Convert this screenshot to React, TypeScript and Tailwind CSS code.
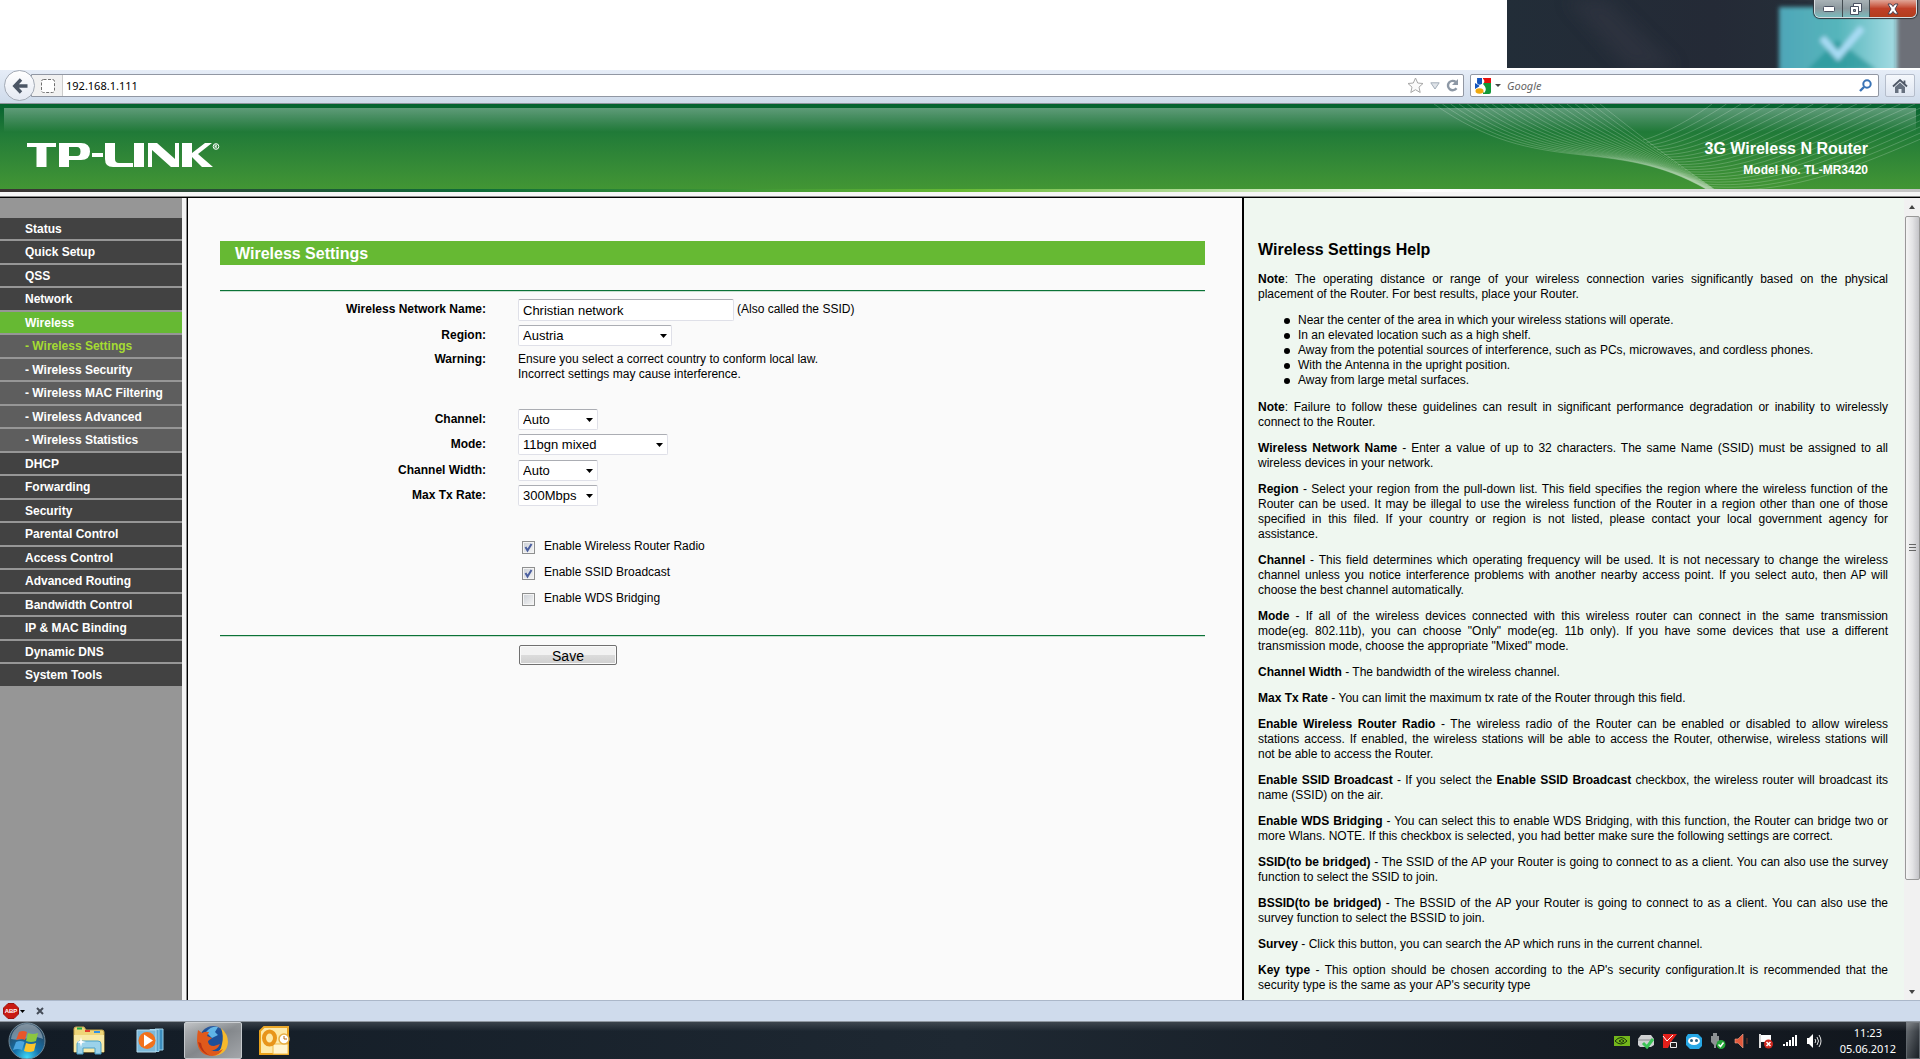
import type { ReactNode } from "react";

const menu = [
  { label: "Status" },
  { label: "Quick Setup" },
  { label: "QSS" },
  { label: "Network" },
  { label: "Wireless", active: true },
  { label: "- Wireless Settings", sub: true, active: true },
  { label: "- Wireless Security", sub: true },
  { label: "- Wireless MAC Filtering", sub: true },
  { label: "- Wireless Advanced", sub: true },
  { label: "- Wireless Statistics", sub: true },
  { label: "DHCP" },
  { label: "Forwarding" },
  { label: "Security" },
  { label: "Parental Control" },
  { label: "Access Control" },
  { label: "Advanced Routing" },
  { label: "Bandwidth Control" },
  { label: "IP & MAC Binding" },
  { label: "Dynamic DNS" },
  { label: "System Tools" },
];

const tips = [
  "Near the center of the area in which your wireless stations will operate.",
  "In an elevated location such as a high shelf.",
  "Away from the potential sources of interference, such as PCs, microwaves, and cordless phones.",
  "With the Antenna in the upright position.",
  "Away from large metal surfaces.",
];

const itemClass = (item: { sub?: boolean; active?: boolean }) => {
  if (item.sub) return item.active ? "bg-[#5e5e5e] text-[#a5dc32]" : "bg-[#5e5e5e] text-white";
  return item.active ? "bg-[#66b933] text-white" : "bg-[#424242] text-white";
};

function TitleBar() {
  return (
    <div className="flex h-[70px] shrink-0 justify-end bg-white">
      <div className="relative h-[68px] w-[413px] overflow-hidden bg-linear-to-r from-[#222d38] via-[#242a36] to-[#26333b]">
        <svg className="h-full w-full" viewBox="0 0 413 68" aria-hidden="true">
          <defs>
            <linearGradient id="glass" x1="0" y1="0" x2="1" y2="0">
              <stop offset="0" stopColor="#4fa6b8" />
              <stop offset="0.5" stopColor="#55b5bb" />
              <stop offset="1" stopColor="#a5dce4" />
            </linearGradient>
            <linearGradient id="top" x1="0" y1="0" x2="1" y2="0">
              <stop offset="0" stopColor="#55585d" stopOpacity="0" />
              <stop offset="1" stopColor="#66696e" />
            </linearGradient>
            <filter id="soft" x="-20%" y="-20%" width="140%" height="140%">
              <feGaussianBlur stdDeviation="2" />
            </filter>
            <filter id="softer" x="-50%" y="-50%" width="200%" height="200%">
              <feGaussianBlur stdDeviation="8" />
            </filter>
          </defs>
          <path d="M60 0h40l70 68h-50z" fill="#353844" opacity=".5" filter="url(#softer)" />
          <path d="M200 -8h213v14z" fill="url(#top)" filter="url(#soft)" />
          <path d="M388 0h25v68h-25z" fill="#6d7078" />
          <g filter="url(#soft)">
            <path d="M272 7h118v70h-118z" fill="url(#glass)" />
            <path d="M300 70l30-30 40 30z" fill="#259497" opacity=".7" />
            <path d="M315 38l16 18 24-28" fill="none" stroke="#a9dcf5" strokeWidth="7" />
          </g>
        </svg>
        <div className="absolute top-0 right-[3px] flex h-[18px] overflow-hidden rounded-b-md border border-t-0 border-[#d6dde0] shadow-[0_0_1px_1px_#30343a]">
          <button aria-label="Minimize" className="flex w-7 items-center justify-center border-r border-[#434b50] bg-linear-to-b from-[#a8b2b6] via-[#8d999e] to-[#78babd]">
            <svg width="12" height="6"><rect x=".5" y=".5" width="11" height="5" rx="1" fill="#fff" stroke="#4b5263" /></svg>
          </button>
          <button aria-label="Restore" className="flex w-[27px] items-center justify-center border-r border-[#434b50] bg-linear-to-b from-[#a8b2b6] via-[#8d999e] to-[#78babd]">
            <svg width="12" height="12" fill="#fff" stroke="#4b5263"><path d="M3.500.5h8v8h-8z" /><path d="M.5 3.500h8v8h-8z" /><path d="M3.500 6.500h2v2h-2z" fill="#8ba0a8" /></svg>
          </button>
          <button aria-label="Close" className="flex w-[46px] items-center justify-center bg-linear-to-b from-[#e0a698] via-[#c04028] to-[#b23c1c]">
            <svg width="14" height="12" viewBox="0 0 14 12"><path d="M2 1h3l2 2.500L9 1h3L9 6l3 5H9L7 8.500 5 11H2l3-5z" fill="#fff" stroke="#4b4252" /></svg>
          </button>
        </div>
      </div>
    </div>
  );
}

function NavBar() {
  return (
    <div className="flex h-[34px] shrink-0 items-center border-b border-[#8f959c] bg-linear-to-b from-[#e6edf7] to-[#cfdbeb] pr-[5px] pb-0.5 pl-1 font-['Noto_Sans',sans-serif]">
      <button aria-label="Back" className="z-10 flex size-[31px] shrink-0 items-center justify-center rounded-full border border-[#a3aab5] bg-linear-to-b from-white to-[#e4e9f3]">
        <svg width="16" height="16" viewBox="0 0 16 16" fill="none" stroke="#4b5665" strokeWidth="3.400"><path d="M9 1.500L2.800 8 9 14.500M3 8h12.500" /></svg>
      </button>
      <div className="-ml-1 flex h-[23px] flex-1 items-center rounded-r-xs border border-[#9197a3] bg-white">
        <div className="flex h-full w-[31px] items-center justify-center border-r border-[#ccc] bg-[#f1f1f1] pl-0.5">
          <svg width="14" height="14"><rect x=".5" y=".5" width="13" height="13" rx="2" fill="#fff" stroke="#707070" strokeDasharray="3 1.500" /></svg>
        </div>
        <input aria-label="Address" defaultValue="192.168.1.111" className="h-full min-w-0 flex-1 pl-[3px] text-[11px] outline-none" />
        <button aria-label="Bookmark" className="mr-1.5">
          <svg width="17" height="17" viewBox="0 0 17 17" fill="#fafafa" stroke="#a8a8a8"><path d="M8.500 1l2.200 5 5.300.5-4 3.600 1.200 5.400-4.700-2.800-4.700 2.800L5 10.100 1 6.500 6.300 6z" /></svg>
        </button>
        <button aria-label="History" className="mr-1.5">
          <svg width="10" height="8" viewBox="0 0 10 8" fill="#dfe3e8" stroke="#a3adb8"><path d="M.8.8h8.400L5 7z" /></svg>
        </button>
        <button aria-label="Reload" className="mr-1">
          <svg width="13" height="13" viewBox="0 0 13 13"><path d="M10.500 9.300A4.700 4.700 0 1 1 9.800 3" fill="none" stroke="#8d98a5" strokeWidth="2.400" /><path d="M12 0v6H6z" fill="#8d98a5" /></svg>
        </button>
      </div>
      <div className="ml-1.5 flex h-[23px] w-[409px] items-center rounded-xs border border-[#9197a3] bg-white pl-1">
        <svg width="16" height="16" viewBox="0 0 16 16" aria-hidden="true">
          <path d="M8 0h8v5H8z" fill="#e8100c" />
          <path d="M8 5h8v9a2 2 0 0 1-2 2H8z" fill="#129839" />
          <path d="M0 5l5 3-5 3zM2 0h5v6H3z" fill="#1455bd" />
          <path d="M7 0c3 2 3 4 1 6 3 3 4 6 1 9L6 11 4 8l3-2z" fill="#fff" />
          <ellipse cx="4.500" cy="3.500" rx="2.500" ry="3.200" fill="#1455bd" />
          <ellipse cx="4.500" cy="13" rx="4" ry="2.700" fill="#efa80d" />
        </svg>
        <svg width="6" height="4" className="ml-1" aria-hidden="true"><path d="M0 0h6L3 3z" fill="#444" /></svg>
        <input aria-label="Search" placeholder="Google" className="h-full min-w-0 flex-1 pl-1.5 text-[11px] italic outline-none placeholder:text-[#666]" />
        <button aria-label="Go" className="mr-1.5">
          <svg width="13" height="13" viewBox="0 0 13 13" fill="none" stroke="#3973b5"><circle cx="8" cy="5" r="3.700" strokeWidth="2" /><path d="M5 8L1 12" strokeWidth="2.400" /></svg>
        </button>
      </div>
      <button aria-label="Home" className="ml-1.5 flex h-[23px] w-[30px] items-center justify-center rounded-xs border border-[#b5bdcb] bg-linear-to-b from-[#f5f8fc] to-[#dee5f1]">
        <svg width="16" height="14" viewBox="0 0 16 14"><path d="M1 7.500L8 1l7 6.500M12.500 1.500v4" fill="none" stroke="#4e5766" strokeWidth="1.800" /><path d="M3 8l5-4.500L13 8v6h-3.500v-4h-3v4H3z" fill="#66707f" /></svg>
      </button>
    </div>
  );
}

const strands = Array.from({ length: 21 }, (_, i) => i / 20);

function Waves() {
  return (
    <svg className="absolute inset-y-0 right-0 h-full w-[490px]" viewBox="0 0 490 85" fill="none" stroke="#fff" strokeWidth=".8" strokeOpacity=".25" aria-hidden="true">
      {strands.map((t) => (
        <path key={`l${t}`} d={`M${4 + t * 166} 0C${110 + t * 95} ${75 - t * 47},${180 + t * 60} ${30 + t * 25},${276 + t * 8} 85`} />
      ))}
      {strands.map((t) => (
        <path key={`r${t}`} d={`M${282 + t * 290} 0C${262 + t * 190} ${15 + t * 35},${230 + t * 150} ${32 + t * 60},${213 + t * 70} ${36 + t * 49}`} />
      ))}
    </svg>
  );
}

function Logo() {
  return (
    <svg className="absolute top-[39px] left-[27px] h-6 w-[193px]" viewBox="0 0 193 24" fill="#fff" role="img" aria-label="TP-LINK">
      <path d="M0 0h29v4h-9.500v20h-10V4H0z" />
      <path fillRule="evenodd" d="M32 0h22q9 0 9 8.500T54 17H42v7H32zM42 4v9h8q3.500 0 3.500-4.500T50 4z" />
      <path d="M65 10h11v4H65z" />
      <path d="M78 0h10v16q0 4 4 4h14v4H86q-8 0-8-8z" />
      <path d="M107 0h10v24h-10z" />
      <path d="M121 0h9l18 16V0h4v24h-8L125 7v17h-4z" />
      <path d="M155 0h10v10l13-10h7l-14 11 15 13h-11l-10-10v10h-10z" />
      <circle cx="189" cy="3.500" r="2.800" fill="none" stroke="#fff" />
      <path d="M188 5V2h1.500v1.500h-1.500l2 1.500" fill="none" stroke="#fff" strokeWidth=".7" />
    </svg>
  );
}

function Header() {
  return (
    <header className="shrink-0">
      <div className="relative h-[85px] bg-linear-to-b from-[#046330] via-[#217b38] via-35% to-[#429634]">
        <div className="absolute inset-x-1 top-1 h-6 bg-linear-to-b from-white/35 to-white/0" />
        <Waves />
        <Logo />
        <div className="absolute top-[35px] right-[52px] text-right font-bold text-white">
          <h1 className="text-base leading-5">3G Wireless N Router</h1>
          <p className="mt-[3px] text-xs leading-4">Model No. TL-MR3420</p>
        </div>
      </div>
      <div className="h-[3px] bg-linear-[to_right,#3b3333,#0e6b38_25%,#66b933_50%,#ffffff_74%,#c4c4c4]" />
      <div className="h-1 bg-[#f6f6f6]" />
      <div className="h-0.5 border-t border-[#8c8c8c] bg-black" />
    </header>
  );
}

function Sidebar() {
  return (
    <nav className="w-[182px] shrink-0 bg-[#969696] pt-5">
      <ul>
        {menu.map((item) => (
          <li key={item.label} className="border-b-2 border-[#969696] odd:h-[23px] even:h-6">
            <a href="#" className={`block h-full pl-[25px] text-xs leading-[22px] font-bold ${itemClass(item)}`}>
              {item.label}
            </a>
          </li>
        ))}
      </ul>
    </nav>
  );
}

function Row({ label, htmlFor, className, children }: { label: string; htmlFor?: string; className?: string; children: ReactNode }) {
  return (
    <div className={`flex ${className ?? "h-[25px]"}`}>
      <label htmlFor={htmlFor} className="w-[266px] shrink-0 pt-[3px] text-right font-bold">
        {label}
      </label>
      <div className="ml-8 flex items-start">{children}</div>
    </div>
  );
}

function Select({ id, value, className }: { id: string; value: string; className: string }) {
  return (
    <span className="relative flex">
      <select id={id} className={`h-[21px] appearance-none rounded-xs border border-[#dfe0e8] border-t-[#abadb3] bg-white pl-1 text-[13px] leading-4 ${className}`}>
        <option>{value}</option>
      </select>
      <svg width="7" height="4" className="pointer-events-none absolute top-[9px] right-[5px]" aria-hidden="true"><path d="M0 0h7L3.500 4z" /></svg>
    </span>
  );
}

function Check({ id, label, checked }: { id: string; label: string; checked?: boolean }) {
  return (
    <div className="flex h-[26px] items-start">
      <span className="relative mt-1 flex">
        <input id={id} type="checkbox" defaultChecked={checked} className="peer size-[13px] appearance-none border border-[#8e8f8f] bg-linear-to-br from-[#cbcfd5] to-[#f6f6f6] shadow-[inset_0_0_0_1px_#f4f4f4]" />
        <svg viewBox="0 0 13 13" className="pointer-events-none absolute inset-0 hidden size-[13px] peer-checked:block" fill="none" stroke="#4b5f9f" strokeWidth="2"><path d="M3.500 6l2 3.500L9.500 3" /></svg>
      </span>
      <label htmlFor={id} className="ml-[9px] pt-0.5">{label}</label>
    </div>
  );
}

function Settings() {
  return (
    <main className="min-w-0 flex-1 overflow-hidden bg-[#fafafa] pt-[43px] pr-[37px] pl-8">
      <h2 className="h-6 bg-[#66b933] pl-[15px] text-base leading-[26px] font-bold text-white">Wireless Settings</h2>
      <form className="mt-[25px] text-xs leading-[15px]">
        <div className="border-t border-[#0b7237] pt-2 shadow-[inset_0_1px_#c9dfd0]">
          <Row label="Wireless Network Name:" htmlFor="ssid" className="h-[26px]">
            <input id="ssid" defaultValue="Christian network" className="h-[22px] w-[216px] rounded-xs border border-[#dfe0e8] border-t-[#abadb3] bg-white pl-1 text-[13px] outline-none" />
            <span className="ml-[3px] pt-[3px]">(Also called the SSID)</span>
          </Row>
          <Row label="Region:" htmlFor="region" className="h-6">
            <Select id="region" value="Austria" className="w-[154px]" />
          </Row>
          <Row label="Warning:" className="h-[60px]">
            <p className="pt-[3px]">
              Ensure you select a correct country to conform local law.
              <br />
              Incorrect settings may cause interference.
            </p>
          </Row>
          <Row label="Channel:" htmlFor="channel">
            <Select id="channel" value="Auto" className="w-20" />
          </Row>
          <Row label="Mode:" htmlFor="mode" className="h-[26px]">
            <Select id="mode" value="11bgn mixed" className="w-[150px]" />
          </Row>
          <Row label="Channel Width:" htmlFor="width">
            <Select id="width" value="Auto" className="w-20" />
          </Row>
          <Row label="Max Tx Rate:" htmlFor="rate" className="h-[52px]">
            <Select id="rate" value="300Mbps" className="w-20" />
          </Row>
          <div className="ml-[302px] pb-5">
            <Check id="radio" label="Enable Wireless Router Radio" checked />
            <Check id="broadcast" label="Enable SSID Broadcast" checked />
            <Check id="wds" label="Enable WDS Bridging" />
          </div>
        </div>
        <div className="border-t border-[#0b7237] pt-[9px] pl-[299px] shadow-[inset_0_1px_#c9dfd0]">
          <button type="button" className="h-5 w-[98px] rounded-xs border border-[#707070] bg-linear-to-b from-[#f2f2f2] from-50% via-[#dcdcdc] via-50% to-[#cfcfcf] pt-0.5 text-sm leading-4 shadow-[inset_0_0_0_1px_#fafafa]">
            Save
          </button>
        </div>
      </form>
    </main>
  );
}

function Para({ term, lines }: { term: string; lines: ReactNode[] }) {
  return (
    <p className="mb-[11px]">
      {lines.map((line, i) => (
        <span key={i} className={`block whitespace-nowrap ${i < lines.length - 1 ? "[text-align-last:justify]" : ""}`}>
          {i === 0 && <b>{term}</b>}
          {line}
        </span>
      ))}
    </p>
  );
}

function Help() {
  return (
    <aside className="flex w-[678px] shrink-0 border-l-2 border-black bg-[#eff7f0]">
      <div className="min-w-0 flex-1 overflow-hidden pt-[42px] pr-4 pl-[14px] text-xs leading-[15px]">
        <h2 className="mb-3 text-base leading-5 font-bold">Wireless Settings Help</h2>
        <Para term="Note" lines={[": The operating distance or range of your wireless connection varies significantly based on the physical", "placement of the Router. For best results, place your Router."]} />
        <ul className="mb-3 pl-[26px]">
          {tips.map((tip) => (
            <li key={tip} className="flex items-center before:mr-2 before:size-1.5 before:rounded-full before:bg-black before:content-['']">
              {tip}
            </li>
          ))}
        </ul>
        <Para term="Note" lines={[": Failure to follow these guidelines can result in significant performance degradation or inability to wirelessly", "connect to the Router."]} />
        <Para term="Wireless Network Name" lines={[" - Enter a value of up to 32 characters. The same Name (SSID) must be assigned to all", "wireless devices in your network."]} />
        <Para term="Region" lines={[" - Select your region from the pull-down list. This field specifies the region where the wireless function of the", "Router can be used. It may be illegal to use the wireless function of the Router in a region other than one of those", "specified in this filed. If your country or region is not listed, please contact your local government agency for", "assistance."]} />
        <Para term="Channel" lines={[" - This field determines which operating frequency will be used. It is not necessary to change the wireless", "channel unless you notice interference problems with another nearby access point. If you select auto, then AP will", "choose the best channel automatically."]} />
        <Para term="Mode" lines={[" - If all of the wireless devices connected with this wireless router can connect in the same transmission", "mode(eg. 802.11b), you can choose \"Only\" mode(eg. 11b only). If you have some devices that use a different", "transmission mode, choose the appropriate \"Mixed\" mode."]} />
        <Para term="Channel Width" lines={[" - The bandwidth of the wireless channel."]} />
        <Para term="Max Tx Rate" lines={[" - You can limit the maximum tx rate of the Router through this field."]} />
        <Para term="Enable Wireless Router Radio" lines={[" - The wireless radio of the Router can be enabled or disabled to allow wireless", "stations access. If enabled, the wireless stations will be able to access the Router, otherwise, wireless stations will", "not be able to access the Router."]} />
        <Para term="Enable SSID Broadcast" lines={[<> - If you select the <b>Enable SSID Broadcast</b> checkbox, the wireless router will broadcast its</>, "name (SSID) on the air."]} />
        <Para term="Enable WDS Bridging" lines={[" - You can select this to enable WDS Bridging, with this function, the Router can bridge two or", "more Wlans. NOTE. If this checkbox is selected, you had better make sure the following settings are correct."]} />
        <Para term="SSID(to be bridged)" lines={[" - The SSID of the AP your Router is going to connect to as a client. You can also use the survey", "function to select the SSID to join."]} />
        <Para term="BSSID(to be bridged)" lines={[" - The BSSID of the AP your Router is going to connect to as a client. You can also use the", "survey function to select the BSSID to join."]} />
        <Para term="Survey" lines={[" - Click this button, you can search the AP which runs in the current channel."]} />
        <Para term="Key type" lines={[" - This option should be chosen according to the AP's security configuration.It is recommended that the", "security type is the same as your AP's security type"]} />
      </div>
      <div className="flex w-4 shrink-0 flex-col items-center bg-[#f1f1f1]">
        <svg width="16" height="18" aria-hidden="true"><path d="M5 11h6L8 7z" fill="#444" /></svg>
        <div className="flex w-[15px] flex-1 items-center justify-center rounded-xs border border-[#989898] bg-linear-to-r from-[#f5f5f5] via-[#e3e3e5] to-[#c4c4c8]">
          <svg width="7" height="8" stroke="#666" aria-hidden="true"><path d="M0 .5h7M0 3.500h7M0 6.500h7" /></svg>
        </div>
        <svg width="16" height="120" aria-hidden="true"><path d="M5 110h6l-3 4z" fill="#444" /></svg>
      </div>
    </aside>
  );
}

function AddonBar() {
  return (
    <div className="flex h-[21px] shrink-0 items-center border-t border-[#abb7c9] bg-[#cfdbec] pl-[3px]">
      <button aria-label="Adblock Plus" className="flex items-center">
        <svg width="16" height="16" viewBox="0 0 16 16">
          <path d="M5 .5h6L15.500 5v6L11 15.500H5L.5 11V5z" fill="#c91a12" stroke="#9c1510" />
          <text x="8" y="10" textAnchor="middle" fontSize="6" fontWeight="bold" fill="#fff">ABP</text>
        </svg>
        <svg width="5" height="3" className="ml-px"><path d="M0 0h5L2.500 3z" /></svg>
      </button>
      <button aria-label="Close bar" className="ml-[11px]">
        <svg width="8" height="8" stroke="#454c58" strokeWidth="2"><path d="M1 1l6 6M7 1L1 7" /></svg>
      </button>
    </div>
  );
}

function StartOrb() {
  return (
    <svg width="38" height="38" viewBox="0 0 38 38">
      <defs>
        <radialGradient id="orb" cx=".5" cy=".95" r=".8">
          <stop offset="0" stopColor="#3fd9f8" />
          <stop offset=".45" stopColor="#1571ab" />
          <stop offset="1" stopColor="#27465f" />
        </radialGradient>
      </defs>
      <circle cx="19" cy="19" r="18" fill="url(#orb)" stroke="#6f8898" />
      <path d="M3 17C4 8 11 2 19 2s15 6 16 15c-10-5-20 3-32 0z" fill="#fff" opacity=".35" />
      <path d="M11 10q4-2 8 0l-2 8q-4-2-9 0z" fill="#e8562a" />
      <path d="M20 11q5 2 10 0l-2 8q-5 2-10 0z" fill="#8cc63f" />
      <path d="M8 20q4-2 8.500 0L14 28q-4-2-9 0z" fill="#4aa5e0" />
      <path d="M18 21q5 2 10 0l-2 8q-5 2-10 0z" fill="#fbc52d" />
    </svg>
  );
}

function Taskbar() {
  return (
    <footer className="relative flex h-[38px] shrink-0 items-center border-t border-[#8f97a0] bg-linear-to-r from-[#121b25] via-[#1e2832] to-[#11161d] font-['Noto_Sans',sans-serif] text-white">
      <div className="pointer-events-none absolute inset-0 bg-linear-to-b from-white/15 via-transparent via-25% to-transparent" />
      <button aria-label="Start" className="ml-2"><StartOrb /></button>
      <button aria-label="Explorer" className="ml-[26px]">
        <svg width="34" height="30" viewBox="0 0 34 30">
          <path d="M2 3q0-2 2-2h8l2 3h16q2 0 2 2v20H2z" fill="#efd578" stroke="#c6a548" />
          <path d="M5 1.500h5v2H5z" fill="#14a93c" />
          <path d="M13 4h5v2h-5z" fill="#e13d2b" />
          <path d="M22 5h6v2h-6z" fill="#3293e4" />
          <path d="M2 9h30v17H2z" fill="#f8e9a6" />
          <path d="M5 28V18q0-3 3-3h18q3 0 3 3v10h-6v-6H11v6z" fill="#9bd2ea" stroke="#4b9fc6" />
          <path d="M9 11l1 4 4 1-4 1-1 4-1-4-4-1 4-1z" fill="#fff" />
        </svg>
      </button>
      <button aria-label="Media Player" className="ml-[30px]">
        <svg width="28" height="26" viewBox="0 0 28 26">
          <path d="M19 1h8v21h-8z" fill="#3c8dbd" stroke="#9bd0ea" />
          <path d="M14 1.500h9v22h-9z" fill="#5ba3cb" stroke="#9bd0ea" />
          <path d="M1 2h19v22H1z" fill="#7db9da" stroke="#b7dcef" />
          <circle cx="11" cy="12.500" r="8.500" fill="#f1711c" />
          <path d="M8 6.500v12l9-6z" fill="#fff" />
        </svg>
      </button>
      <button aria-label="Firefox" className="ml-5 flex h-[37px] w-[58px] items-center justify-center rounded-xs border border-[#c4c8cc] bg-linear-to-br from-[#b7babd] via-[#83878b] to-[#a3a6aa]">
        <svg width="32" height="32" viewBox="0 0 32 32">
          <circle cx="16" cy="14" r="13" fill="#1d4f98" />
          <path d="M9 7q5-6 12-5l-3 5 3 3-6 3z" fill="#5fb4e6" />
          <path d="M24 3q7 6 7 14-1 13-15 14 8-4 9-12 2-8-1-16z" fill="#f6b92c" />
          <path d="M1 5l4 3q3-2 7-1l-2 4 5 2-4 3q0 5 6 5l6-2q-3 7-9 6 6 3 12-1-4 7-11 7Q1 30 0 16q0-6 1-11z" fill="#e0591b" />
          <path d="M1 17q2 11 13 14-9-4-10-13z" fill="#b93414" />
        </svg>
      </button>
      <button aria-label="Outlook" className="ml-[17px]">
        <svg width="31" height="30" viewBox="0 0 31 30">
          <path d="M5 1h24v27H1V5z" fill="#fde9a9" stroke="#e9a11a" strokeWidth="2" />
          <path d="M14 18h15v10H14z" fill="#fff4cf" stroke="#eebb4b" />
          <ellipse cx="10.500" cy="12" rx="5.500" ry="6.500" fill="none" stroke="#e8951b" strokeWidth="4" />
          <circle cx="25" cy="13" r="5" fill="#fff" stroke="#e6ae45" strokeWidth="1.500" />
          <path d="M25 10v3h3" fill="none" stroke="#b66b13" />
        </svg>
      </button>
      <div className="ml-auto flex items-center gap-2">
        <svg width="16" height="16" viewBox="0 0 16 16"><path d="M0 3h16v10H0z" fill="#74b71b" /><path d="M1 8q6-7 12 0-6 6-12 0zm4 0q3-3 5 0-2 3-5 0z" fill="none" stroke="#17330a" /></svg>
        <svg width="16" height="16" viewBox="0 0 16 16"><path d="M3 2h10l3 4v6l-3 2H2l-2-2V6z" fill="#cfd1d3" /><path d="M0 7h15" stroke="#85898c" /><path d="M5 10l4 4 6-8" fill="none" stroke="#3cc457" strokeWidth="3" /></svg>
        <svg width="16" height="16" viewBox="0 0 16 16"><path d="M1 1h14L9 9l-3 6H1z" fill="#e3201b" /><path d="M1 3l4 5 6-6" fill="none" stroke="#fff" /><path d="M8.500 9.500h6v5h-6z" fill="#222" stroke="#eee" /></svg>
        <svg width="16" height="16" viewBox="0 0 16 16"><path d="M2 1h10l4 4v8l-3 3H4l-4-4V4z" fill="#27a7e5" /><ellipse cx="8" cy="8" rx="6" ry="4" fill="#fff" /><circle cx="5.500" cy="7.500" r="1.500" fill="#276184" /><circle cx="10.500" cy="7.500" r="1.500" fill="#276184" /></svg>
        <svg width="16" height="16" viewBox="0 0 16 16"><path d="M3 0v3H1v6l3 3v3h2v-3l3-3V3H7V0z" fill="#8d9194" /><circle cx="11" cy="11.500" r="4.500" fill="#23a637" /><path d="M8.500 11.500l2 2 3-4" fill="none" stroke="#fff" strokeWidth="1.500" /></svg>
        <svg width="16" height="16" viewBox="0 0 16 16"><path d="M1 6h3l5-5v14l-5-5H1z" fill="#e2593c" stroke="#f0a58f" strokeWidth=".6" /><path d="M13 5v6" stroke="#733526" /></svg>
        <svg width="16" height="16" viewBox="0 0 16 16"><path d="M2 1v14" stroke="#ddd" strokeWidth="2" /><path d="M3 2h10v7H3z" fill="#fff" /><circle cx="10.500" cy="11" r="4.500" fill="#d0281f" /><path d="M8.500 9l4 4m0-4l-4 4" stroke="#fff" strokeWidth="1.600" /></svg>
        <svg width="16" height="16" viewBox="0 0 16 16" fill="#fff"><path d="M1 11h2v2H1zM4 9h2v4H4zM7 7h2v6H7zM10 4h2v9h-2zM13 2h2v11h-2z" /></svg>
        <svg width="16" height="16" viewBox="0 0 16 16"><path d="M1 5h2l4-4v14l-4-4H1z" fill="#fff" /><path d="M9 6q1.500 2 0 4m2-6q3 4 0 8m2-10q4 6 0 12" fill="none" stroke="#e4e4e4" /></svg>
      </div>
      <div className="mr-2.5 ml-[18px] text-center text-[11px] leading-4">
        <p>11:23</p>
        <p>05.06.2012</p>
      </div>
      <button aria-label="Show desktop" className="h-full w-[14px] border border-[#60666c] bg-linear-to-br from-[#6d7277] to-[#1b2026]" />
    </footer>
  );
}

export default function App() {
  return (
    <div className="flex h-screen flex-col overflow-hidden bg-white font-['Liberation_Sans',Arial,sans-serif] text-black">
      <TitleBar />
      <NavBar />
      <Header />
      <div className="flex min-h-0 flex-1">
        <Sidebar />
        <div className="w-1 shrink-0 bg-[#f4f4f4]" />
        <div className="w-0.5 shrink-0 border-l border-[#8c8c8c] bg-black" />
        <Settings />
        <Help />
      </div>
      <AddonBar />
      <Taskbar />
    </div>
  );
}
